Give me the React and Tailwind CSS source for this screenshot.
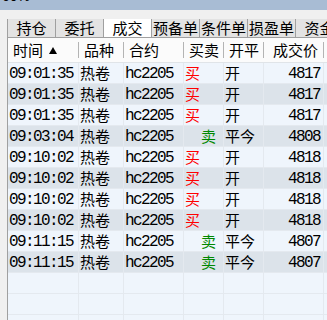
import React from 'react';

// Trade list rows: time, product, contract, side, offset, price
const trades = [
  ['09:01:35', '热卷', 'hc2205', '买', '开', '4817'],
  ['09:01:35', '热卷', 'hc2205', '买', '开', '4817'],
  ['09:01:35', '热卷', 'hc2205', '买', '开', '4817'],
  ['09:03:04', '热卷', 'hc2205', '卖', '平今', '4808'],
  ['09:10:02', '热卷', 'hc2205', '买', '开', '4818'],
  ['09:10:02', '热卷', 'hc2205', '买', '开', '4818'],
  ['09:10:02', '热卷', 'hc2205', '买', '开', '4818'],
  ['09:10:02', '热卷', 'hc2205', '买', '开', '4818'],
  ['09:11:15', '热卷', 'hc2205', '卖', '平今', '4807'],
  ['09:11:15', '热卷', 'hc2205', '卖', '平今', '4807'],
];

const tabs = ['持仓', '委托', '成交', '预备单', '条件单', '损盈单', '资金'];

const cjk = "font-['Noto_Sans_CJK_SC',sans-serif] text-[15px] -translate-y-px";
const mono = "font-['Liberation_Mono','Noto_Sans_CJK_SC',monospace] text-[16px] tracking-[-1.6px] translate-y-px";
const cols = 'grid grid-cols-[71px_45px_60px_40px_40px_60px_1fr]';
const cell = 'border-r border-[#e4e9ef] flex items-center overflow-hidden whitespace-nowrap';

const HeaderCell = ({ children, className = '' }) => (
  <div className="flex items-center">
    <div className={`flex-1 flex items-center ${className}`}>{children}</div>
    <div className="w-px h-[16px] bg-[#b4b4b4]"></div>
  </div>
);

const App = () => {
  return (
    <div className="w-[327px] h-[320px] overflow-hidden bg-[#f0f0f0] text-black leading-none">
      {/* window title strip */}
      <div className="h-[10px] bg-[#a8bcd4] overflow-hidden">
        <div className="-mt-[11px] pl-[2px] font-['Liberation_Sans',sans-serif] text-[14px] leading-[14px]">60%</div>
      </div>
      <div className="h-[9px]"></div>

      {/* tabs */}
      <div className="flex h-[18px] pl-[7px]">
        {tabs.map((t, i) => (
          <div
            key={t}
            className={`w-[48px] shrink-0 flex items-center justify-center border-l border-[#a0a0a0] ${
              i === 2 ? 'bg-white' : 'bg-[#e3e3e3]'
            }`}
          >
            <span className={cjk}>{t}</span>
          </div>
        ))}
      </div>

      {/* table */}
      <div className="ml-[7px] border-l border-t border-[#a0a0a0] bg-[#eff5fc] h-[300px]">
        <div className={`${cols} h-[25px] bg-[#fbfbfb] border-b border-[#e0e4e8]`}>
          <HeaderCell className="pl-[5px] gap-[6px]">
            <span className={cjk}>时间</span>
            <svg width="8" height="7" viewBox="0 0 8 7">
              <path d="M4 0 L8 7 L0 7 Z" fill="#000" />
            </svg>
          </HeaderCell>
          <HeaderCell className="pl-[5px]"><span className={cjk}>品种</span></HeaderCell>
          <HeaderCell className="pl-[5px]"><span className={cjk}>合约</span></HeaderCell>
          <HeaderCell className="pl-[5px]"><span className={cjk}>买卖</span></HeaderCell>
          <HeaderCell className="pl-[5px]"><span className={cjk}>开平</span></HeaderCell>
          <HeaderCell className="justify-end pr-[5px]"><span className={cjk}>成交价</span></HeaderCell>
          <div></div>
        </div>

        {trades.map((r, i) => (
          <div
            key={i}
            className={`${cols} h-[21px] border-b border-[#e4e9ef] ${i % 2 ? 'bg-[#dce3ea]' : 'bg-[#eff5fc]'}`}
          >
            <div className={`${cell} pl-[1px]`}><span className={mono}>{r[0]}</span></div>
            <div className={`${cell} pl-[1px]`}><span className={cjk}>{r[1]}</span></div>
            <div className={`${cell} pl-[1px]`}><span className={mono}>{r[2]}</span></div>
            <div className={`${cell} ${r[3] === '买' ? 'pl-[1px]' : 'pl-[17px]'}`}>
              <span className={`${cjk} ${r[3] === '买' ? 'text-[#ff0000]' : 'text-[#008800]'}`}>{r[3]}</span>
            </div>
            <div className={`${cell} pl-[1px]`}><span className={cjk}>{r[4]}</span></div>
            <div className={`${cell} justify-end pr-[3px]`}><span className={mono}>{r[5]}</span></div>
            <div></div>
          </div>
        ))}

        {[0, 1, 2].map((k) => (
          <div key={k} className={`${cols} h-[21px] border-b border-[#e4e9ef]`}>
            {[0, 1, 2, 3, 4, 5].map((c) => (
              <div key={c} className={cell}></div>
            ))}
            <div></div>
          </div>
        ))}
      </div>
    </div>
  );
};

export default App;
